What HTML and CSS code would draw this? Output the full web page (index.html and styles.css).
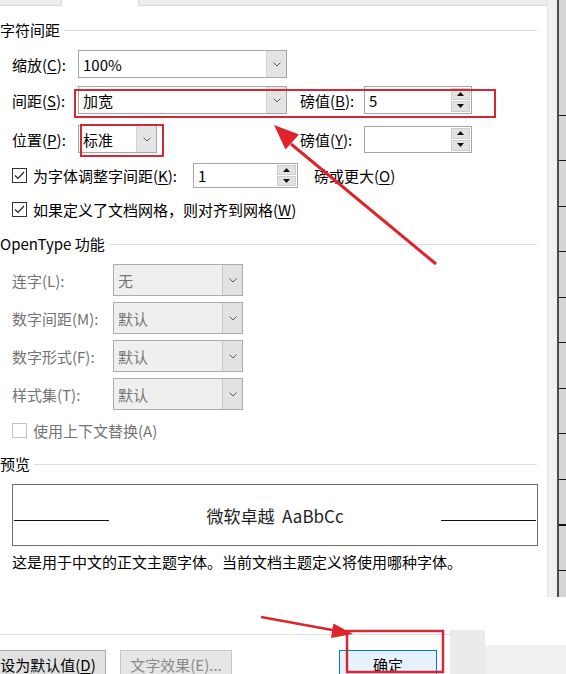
FILE: index.html
```html
<!DOCTYPE html>
<html lang="zh-CN">
<head>
<meta charset="utf-8">
<title>字体 - 高级</title>
<link rel="stylesheet" href="styles.css">
</head>
<body>
<div class="screen">
  <div class="main">
    <div class="page">
      <div class="tabs"><span class="tab t1"></span><span class="tab t2"></span><span class="tab t3"></span></div>

      <div class="group g1"><span>字符间距</span></div>

      <div class="row r1">
        <span class="lbl">缩放(<u>C</u>):</span>
        <div class="select w209"><span class="val">100%</span><span class="dd"><svg width="8" height="5" viewBox="0 0 8 5"><polyline points="0.5,0.5 4,4 7.5,0.5"/></svg></span></div>
      </div>

      <div class="row r2">
        <span class="lbl">间距(<u>S</u>):</span>
        <div class="select w209"><span class="val">加宽</span><span class="dd"><svg width="8" height="5" viewBox="0 0 8 5"><polyline points="0.5,0.5 4,4 7.5,0.5"/></svg></span></div>
        <span class="lbl2">磅值(<u>B</u>):</span>
        <div class="spin w108"><span class="val">5</span><span class="btns"><span class="sb"><svg width="7" height="4" viewBox="0 0 7 4"><polygon points="3.5,0 7,4 0,4"/></svg></span><span class="sb"><svg width="7" height="4" viewBox="0 0 7 4"><polygon points="0,0 7,0 3.5,4"/></svg></span></span></div>
      </div>

      <div class="row r3">
        <span class="lbl">位置(<u>P</u>):</span>
        <div class="select w79"><span class="val">标准</span><span class="dd"><svg width="8" height="5" viewBox="0 0 8 5"><polyline points="0.5,0.5 4,4 7.5,0.5"/></svg></span></div>
        <span class="lbl2 l3">磅值(<u>Y</u>):</span>
        <div class="spin w108 h27"><span class="val"></span><span class="btns"><span class="sb"><svg width="7" height="4" viewBox="0 0 7 4"><polygon points="3.5,0 7,4 0,4"/></svg></span><span class="sb"><svg width="7" height="4" viewBox="0 0 7 4"><polygon points="0,0 7,0 3.5,4"/></svg></span></span></div>
      </div>

      <div class="row r4">
        <span class="cb"><svg width="13" height="13" viewBox="0 0 13 13"><polyline points="2,6.5 5,9.5 11,3"/></svg></span>
        <span class="cbl kern">为字体调整字间距(<u>K</u>):</span>
        <div class="spin w105 h25"><span class="val">1</span><span class="btns"><span class="sb"><svg width="7" height="4" viewBox="0 0 7 4"><polygon points="3.5,0 7,4 0,4"/></svg></span><span class="sb"><svg width="7" height="4" viewBox="0 0 7 4"><polygon points="0,0 7,0 3.5,4"/></svg></span></span></div>
        <span class="after">磅或更大(<u>O</u>)</span>
      </div>

      <div class="row r5">
        <span class="cb"><svg width="13" height="13" viewBox="0 0 13 13"><polyline points="2,6.5 5,9.5 11,3"/></svg></span>
        <span class="cbl">如果定义了文档网格，则对齐到网格(<u>W</u>)</span>
      </div>

      <div class="group g2"><span>OpenType 功能</span></div>

      <div class="row ot first">
        <span class="lbl dis w101">连字(L):</span>
        <div class="select dsel w130"><span class="val">无</span><span class="dd"><svg width="8" height="5" viewBox="0 0 8 5"><polyline points="0.5,0.5 4,4 7.5,0.5"/></svg></span></div>
      </div>
      <div class="row ot">
        <span class="lbl dis w101">数字间距(M):</span>
        <div class="select dsel w130"><span class="val">默认</span><span class="dd"><svg width="8" height="5" viewBox="0 0 8 5"><polyline points="0.5,0.5 4,4 7.5,0.5"/></svg></span></div>
      </div>
      <div class="row ot">
        <span class="lbl dis w101">数字形式(F):</span>
        <div class="select dsel w130"><span class="val">默认</span><span class="dd"><svg width="8" height="5" viewBox="0 0 8 5"><polyline points="0.5,0.5 4,4 7.5,0.5"/></svg></span></div>
      </div>
      <div class="row ot">
        <span class="lbl dis w101">样式集(T):</span>
        <div class="select dsel w130"><span class="val">默认</span><span class="dd"><svg width="8" height="5" viewBox="0 0 8 5"><polyline points="0.5,0.5 4,4 7.5,0.5"/></svg></span></div>
      </div>

      <div class="row r6">
        <span class="cb off"></span>
        <span class="cbl dis">使用上下文替换(A)</span>
      </div>

      <div class="group g3"><span>预览</span></div>

      <div class="preview">
        <span class="pline"></span>
        <span class="ptext">微软卓越&nbsp;&nbsp;AaBbCc</span>
        <span class="pline"></span>
      </div>

      <div class="desc">这是用于中文的正文主题字体。当前文档主题定义将使用哪种字体。</div>
    </div>
    <div class="strip"><span class="sa"></span><span class="sb2"></span><span class="sc"><span class="ruler"></span></span></div>
  </div>

  <div class="footer">
    <div class="fl">
      <span class="btn b1">设为默认值(<u>D</u>)</span>
      <span class="btn b2">文字效果(E)...</span>
      <span class="btn b3">确定</span>
    </div>
    <div class="fr"><span class="fra"></span><span class="frb"></span></div>
  </div>

  <svg class="marks" width="566" height="674" viewBox="0 0 566 674">
    <rect x="75" y="90" width="420" height="27" fill="none" stroke="#d3283a" stroke-width="2"/>
    <rect x="81" y="125" width="82" height="31" fill="none" stroke="#d3283a" stroke-width="2"/>
    <rect x="347" y="631" width="96" height="41" fill="none" stroke="#d3283a" stroke-width="2.5"/>
    <line x1="436" y1="264" x2="291" y2="144" stroke="#e0232a" stroke-width="3"/>
    <polygon points="274,125 285.5,149.5 299,134.5" fill="#e0232a"/>
    <line x1="261" y1="617" x2="335" y2="630.5" stroke="#e0232a" stroke-width="2.5"/>
    <polygon points="353,634 331,638 333.5,623.5" fill="#e0232a"/>
  </svg>
</div>
</body>
</html>
```
FILE: styles.css
```css
* { box-sizing: border-box; }
html, body { margin: 0; padding: 0; }
body {
  width: 566px;
  height: 674px;
  overflow: hidden;
  background: #fff;
  font-family: "Noto Sans CJK SC", "Noto Sans", sans-serif;
  font-size: 15px;
  color: #000;
}
u { text-decoration: underline; text-underline-offset: 2px; }

.screen { position: relative; width: 566px; height: 674px; display: flex; flex-direction: column; }
.main { display: flex; height: 634px; }
.page { width: 547px; display: flex; flex-direction: column; }

.tabs { display: flex; height: 6px; }
.tab { background: #ededed; border-bottom: 1px solid #d9d9d9; }
.tab.t1 { width: 62px; border-right: 1px solid #d9d9d9; }
.tab.t2 { width: 76px; background: #fff; border-bottom: none; }
.tab.t3 { flex: 1; border-left: 1px solid #d9d9d9; }

.group {
  display: flex;
  align-items: center;
  gap: 4px;
  height: 20px;
  line-height: 20px;
  margin-right: 10px;
  white-space: nowrap;
}
.group::after { content: ""; flex: 1; height: 1px; background: #dedede; }
.g1 { margin-top: 14px; }
.g2 { margin-top: 16px; }
.g3 { margin-top: 14px; }

.row { display: flex; align-items: center; padding-left: 12px; white-space: nowrap; }
.r1 { margin-top: 10px; height: 28px; }
.r2 { margin-top: 8px; height: 28px; }
.r3 { margin-top: 11px; height: 28px; }
.r4 { margin-top: 10px; height: 25px; }
.r5 { margin-top: 12px; height: 18px; }
.r6 { margin-top: 10px; height: 20px; }
.ot { margin-top: 6px; height: 32px; }
.ot.first { margin-top: 10px; }

.lbl { width: 66px; flex: none; }
.lbl.w101 { width: 101px; }
.lbl2 { margin-left: 13px; width: 64px; flex: none; }
.lbl2.l3 { margin-left: 143px; }
.dis { color: #747474; }

.select {
  display: flex;
  height: 100%;
  border: 1px solid #a6a6a6;
  background: #fff;
  flex: none;
}
.w209 { width: 209px; }
.w79 { width: 79px; }
.w130 { width: 130px; }
.select .val { flex: 1; padding-left: 4px; display: flex; align-items: center; }
.select .dd {
  width: 20px;
  background: #e4e4e4;
  border-left: 1px solid #d2d2d2;
  display: flex;
  align-items: center;
  justify-content: center;
}
.select .dd polyline { fill: none; stroke: #5a5a5a; stroke-width: 1; }
.dsel { background: #efefef; border-color: #acacac; border-width: 1.5px; color: #757575; }
.dsel .dd { background: #e2e2e2; border-left-color: #c8c8c8; }

.spin {
  display: flex;
  height: 28px;
  border: 1px solid #a6a6a6;
  background: #fff;
  flex: none;
}
.w108 { width: 108px; }
.w105 { width: 105px; }
.h27 { height: 27px; }
.h25 { height: 25px; }
.spin .val { flex: 1; padding-left: 4px; display: flex; align-items: center; }
.spin .btns { width: 20px; display: flex; flex-direction: column; gap: 1px; padding: 1px 1px 1px 0; }
.spin .sb {
  flex: 1;
  background: #e2e2e2;
  border: 1px solid #cdcdcd;
  display: flex;
  align-items: center;
  justify-content: center;
}
.spin .sb polygon { fill: #111; }

.cb {
  width: 15px;
  height: 15px;
  border: 1px solid #333;
  background: #fff;
  flex: none;
  display: flex;
  align-items: center;
  justify-content: center;
}
.cb polyline { fill: none; stroke: #222; stroke-width: 1.2; }
.cb.off { border-color: #c2c2c2; }
.cbl { margin-left: 6px; }
.kern { width: 160px; flex: none; }
.after { margin-left: 16px; }

.preview {
  margin-top: 10px;
  margin-left: 12px;
  width: 526px;
  height: 62px;
  border: 1px solid #6e6e6e;
  display: flex;
  align-items: center;
  padding: 0 1px;
}
.pline { width: 95px; height: 1px; background: #111; margin-top: 11px; flex: none; }
.ptext { flex: 1; text-align: center; font-size: 17px; color: #222; }

.desc { margin-top: 6px; padding-left: 12px; height: 20px; line-height: 20px; white-space: nowrap; }

.strip { width: 19px; height: 597px; display: flex; flex: none; }
.strip .sa { width: 10px; background: #f1f1f1; border-left: 1px solid #e2e2e2; }
.strip .sb2 { width: 2px; background: #4b4b4b; }
.strip .sc { flex: 1; background: #d5d5d5; display: flex; flex-direction: column; }
.strip .ruler {
  margin-top: 115px;
  flex: 1;
  background: repeating-linear-gradient(to bottom, #111 0, #111 1px, transparent 1px, transparent 45.5px);
}

.footer { display: flex; height: 40px; }
.fl {
  width: 450px;
  border-top: 1px solid #e2e2e2;
  display: flex;
  align-items: flex-start;
  padding-top: 15px;
}
.btn {
  height: 28px;
  border: 1px solid #adadad;
  background: #e1e1e1;
  display: flex;
  align-items: center;
  justify-content: center;
  white-space: nowrap;
  flex: none;
}
.b1 { margin-left: -10px; width: 116px; }
.b2 { margin-left: 14px; width: 112px; color: #8a8a8a; background: #e6e6e6; border-color: #c6c6c6; }
.b3 { margin-left: 107px; width: 98px; border-color: #0078d7; background: #e5f1fb; }
.fr { flex: 1; display: flex; }
.fr .fra { width: 35px; background: #ebebeb; margin-top: -4px; }
.fr .frb { flex: 1; background: #f0f0f0; margin-top: 11px; }

.marks { position: absolute; left: 0; top: 0; pointer-events: none; }
```
